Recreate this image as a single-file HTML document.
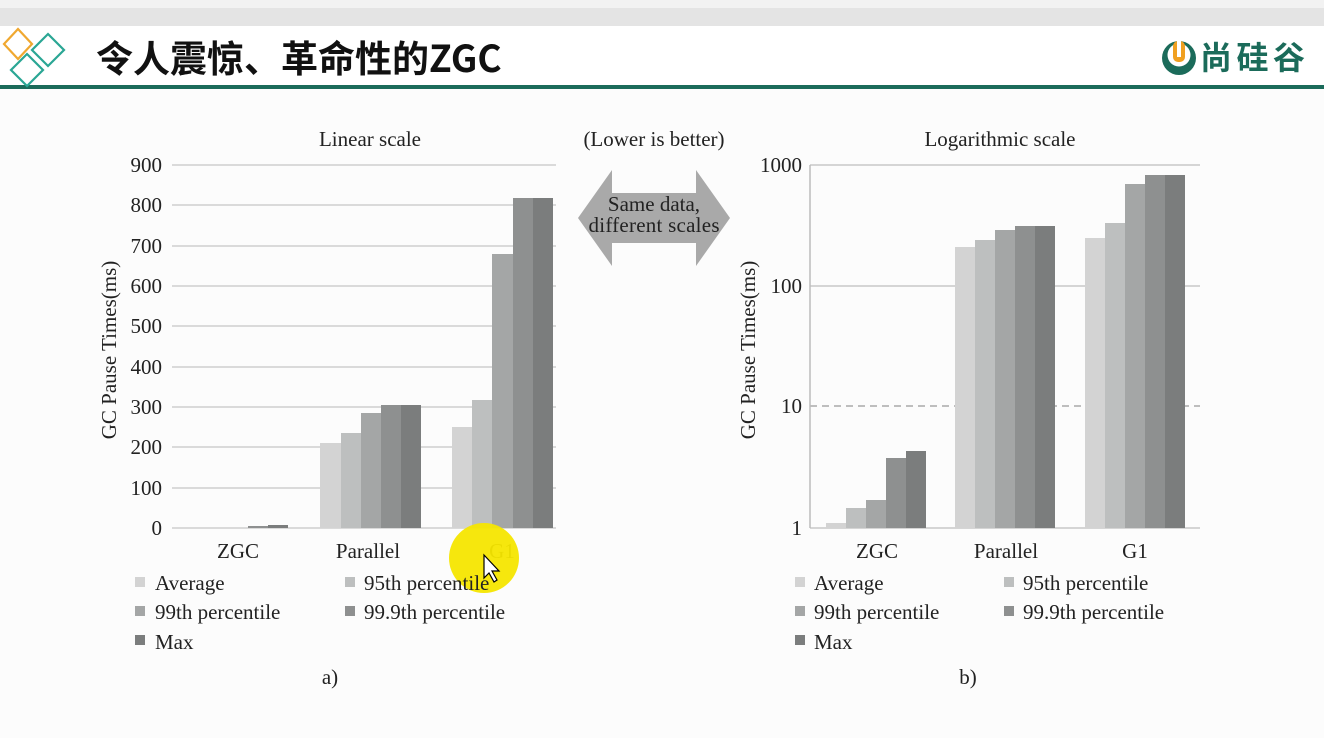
<!DOCTYPE html>
<html><head><meta charset="utf-8"><style>
body{margin:0;width:1324px;height:738px;overflow:hidden;background:#fcfcfc;font-family:"Liberation Serif",serif;}
</style></head><body>
<svg width="1324" height="738" viewBox="0 0 1324 738" xmlns="http://www.w3.org/2000/svg" style="position:absolute;left:0;top:0">
<rect x="0" y="0" width="1324" height="8" fill="#f2f2f2"/>
<rect x="0" y="8" width="1324" height="18" fill="#e4e4e4"/>
<rect x="0" y="26" width="1324" height="60" fill="#ffffff"/>
<rect x="0" y="85" width="1324" height="4" fill="#1b6b5a"/>
<g fill="none" stroke-width="2.2">
<path d="M18 29 L32 44 L18 59 L4 44 Z" stroke="#f0a830"/>
<path d="M48 34 L64 50 L48 66 L32 50 Z" stroke="#2aa694"/>
<path d="M27 54 L43 70 L27 86 L11 70 Z" stroke="#2aa694"/>
</g>
<text x="96" y="72" font-family="'Noto Sans CJK SC',sans-serif" font-weight="bold" font-size="37" fill="#111">令人震惊、革命性的ZGC</text>
<circle cx="1179" cy="58" r="17" fill="#1b6b5a"/>
<circle cx="1179" cy="55" r="11.5" fill="#fff"/>
<rect x="1173" y="41" width="12" height="21" rx="5" fill="#f0a020"/>
<rect x="1177" y="41" width="4" height="16" fill="#fff"/>
<text x="1200" y="69" font-family="'Noto Sans CJK SC',sans-serif" font-weight="bold" font-size="32" fill="#1b6b5a" textLength="105">尚硅谷</text>

<g font-size="21" fill="#222">
<text x="370" y="146" text-anchor="middle">Linear scale</text>
<text x="654" y="146" text-anchor="middle">(Lower is better)</text>
<text x="1000" y="146" text-anchor="middle">Logarithmic scale</text>
</g>
<path d="M578 218 L612 170 L612 193 L696 193 L696 170 L730 218 L696 266 L696 243 L612 243 L612 266 Z" fill="#a9a9a9"/>
<text x="654" y="211" text-anchor="middle" font-size="21" fill="#222">Same data,</text>
<text x="654" y="232" text-anchor="middle" font-size="21" fill="#222" textLength="131">different scales</text>

<g stroke="#cfcfcf" stroke-width="1.5">
<line x1="172" y1="165" x2="556" y2="165"/><line x1="172" y1="205" x2="556" y2="205"/>
<line x1="172" y1="246" x2="556" y2="246"/><line x1="172" y1="286" x2="556" y2="286"/>
<line x1="172" y1="326" x2="556" y2="326"/><line x1="172" y1="367" x2="556" y2="367"/>
<line x1="172" y1="407" x2="556" y2="407"/><line x1="172" y1="447" x2="556" y2="447"/>
<line x1="172" y1="488" x2="556" y2="488"/><line x1="172" y1="528" x2="556" y2="528"/>
</g>
<g font-size="21" fill="#222" text-anchor="end">
<text x="162" y="172">900</text><text x="162" y="212">800</text><text x="162" y="253">700</text>
<text x="162" y="293">600</text><text x="162" y="333">500</text><text x="162" y="374">400</text>
<text x="162" y="414">300</text><text x="162" y="454">200</text><text x="162" y="495">100</text>
<text x="162" y="535">0</text>
</g>
<text transform="translate(116 350) rotate(-90)" text-anchor="middle" font-size="21" fill="#222">GC Pause Times(ms)</text>
<rect x="248" y="526" width="20" height="2" fill="#8e9090"/><rect x="268" y="525" width="20" height="3" fill="#7b7d7d"/>
<rect x="320" y="443" width="21" height="85" fill="#d3d3d3"/>
<rect x="341" y="433" width="20" height="95" fill="#bdbfbf"/>
<rect x="361" y="413" width="20" height="115" fill="#a4a6a6"/>
<rect x="381" y="405" width="20" height="123" fill="#8e9090"/>
<rect x="401" y="405" width="20" height="123" fill="#7b7d7d"/>
<rect x="452" y="427" width="20" height="101" fill="#d3d3d3"/>
<rect x="472" y="400" width="20" height="128" fill="#bdbfbf"/>
<rect x="492" y="254" width="21" height="274" fill="#a4a6a6"/>
<rect x="513" y="198" width="20" height="330" fill="#8e9090"/>
<rect x="533" y="198" width="20" height="330" fill="#7b7d7d"/>
<g font-size="21" fill="#222" text-anchor="middle">
<text x="238" y="558">ZGC</text><text x="368" y="558">Parallel</text><text x="502" y="558">G1</text>
</g>
<circle cx="484" cy="558" r="35" fill="#f5e600" opacity="0.95"/>
<path d="M484 555 L484 578 L489 573 L494 582 L497 580 L492 571 L499 571 Z" fill="#fff" stroke="#000" stroke-width="1.2"/>

<g font-size="21" fill="#222">
<rect x="135" y="577" width="10" height="10" fill="#d3d3d3"/><text x="155" y="590">Average</text>
<rect x="345" y="577" width="10" height="10" fill="#bdbfbf"/><text x="364" y="590">95th percentile</text>
<rect x="135" y="606" width="10" height="10" fill="#a4a6a6"/><text x="155" y="619">99th percentile</text>
<rect x="345" y="606" width="10" height="10" fill="#8e9090"/><text x="364" y="619">99.9th percentile</text>
<rect x="135" y="635" width="10" height="10" fill="#7b7d7d"/><text x="155" y="649">Max</text>
<text x="330" y="684" text-anchor="middle">a)</text>
<rect x="795" y="577" width="10" height="10" fill="#d3d3d3"/><text x="814" y="590">Average</text>
<rect x="1004" y="577" width="10" height="10" fill="#bdbfbf"/><text x="1023" y="590">95th percentile</text>
<rect x="795" y="606" width="10" height="10" fill="#a4a6a6"/><text x="814" y="619">99th percentile</text>
<rect x="1004" y="606" width="10" height="10" fill="#8e9090"/><text x="1023" y="619">99.9th percentile</text>
<rect x="795" y="635" width="10" height="10" fill="#7b7d7d"/><text x="814" y="649">Max</text>
<text x="968" y="684" text-anchor="middle">b)</text>
</g>

<g stroke="#c8c8c8" stroke-width="1.5">
<line x1="810" y1="165" x2="1200" y2="165"/><line x1="810" y1="286" x2="1200" y2="286"/>
<line x1="810" y1="528" x2="1200" y2="528"/>
<line x1="810" y1="406" x2="1200" y2="406" stroke-dasharray="7 5" stroke="#aaa"/>
<line x1="810" y1="165" x2="810" y2="528" stroke="#bbb"/>
</g>
<g font-size="21" fill="#222" text-anchor="end">
<text x="802" y="172">1000</text><text x="802" y="293">100</text><text x="802" y="413">10</text><text x="802" y="535">1</text>
</g>
<text transform="translate(755 350) rotate(-90)" text-anchor="middle" font-size="21" fill="#222">GC Pause Times(ms)</text>
<rect x="826" y="523" width="20" height="5" fill="#d3d3d3"/>
<rect x="846" y="508" width="20" height="20" fill="#bdbfbf"/>
<rect x="866" y="500" width="20" height="28" fill="#a4a6a6"/>
<rect x="886" y="458" width="20" height="70" fill="#8e9090"/>
<rect x="906" y="451" width="20" height="77" fill="#7b7d7d"/>
<rect x="955" y="247" width="20" height="281" fill="#d3d3d3"/>
<rect x="975" y="240" width="20" height="288" fill="#bdbfbf"/>
<rect x="995" y="230" width="20" height="298" fill="#a4a6a6"/>
<rect x="1015" y="226" width="20" height="302" fill="#8e9090"/>
<rect x="1035" y="226" width="20" height="302" fill="#7b7d7d"/>
<rect x="1085" y="238" width="20" height="290" fill="#d3d3d3"/>
<rect x="1105" y="223" width="20" height="305" fill="#bdbfbf"/>
<rect x="1125" y="184" width="20" height="344" fill="#a4a6a6"/>
<rect x="1145" y="175" width="20" height="353" fill="#8e9090"/>
<rect x="1165" y="175" width="20" height="353" fill="#7b7d7d"/>
<g font-size="21" fill="#222" text-anchor="middle">
<text x="877" y="558">ZGC</text><text x="1006" y="558">Parallel</text><text x="1135" y="558">G1</text>
</g>
</svg>
</body></html>
